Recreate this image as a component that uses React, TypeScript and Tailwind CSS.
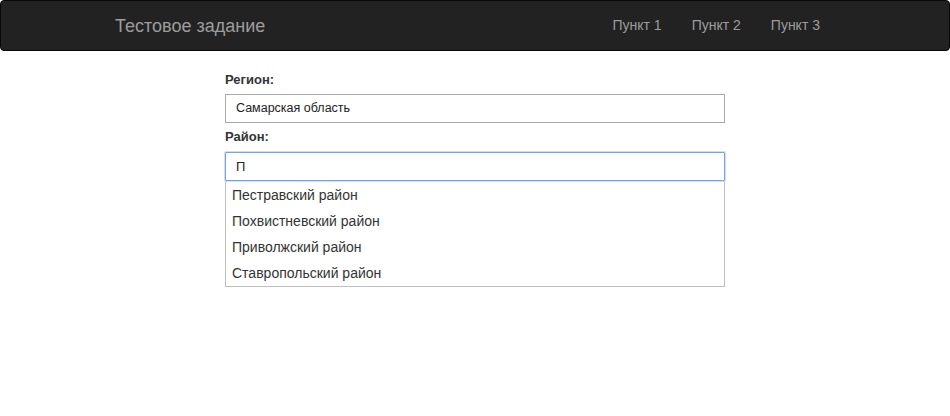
import React from "react";

export default function App() {
  const items = ["Пестравский район", "Похвистневский район", "Приволжский район", "Ставропольский район"];
  return (
    <div className="min-h-[416px] bg-white font-['Liberation_Sans',Arial,sans-serif] text-[#333]">
      <nav className="h-[51px] bg-[#222] border border-[#080808] rounded-[4px]">
        <div className="w-[750px] mx-auto px-[15px] flex items-center justify-between h-[49px]">
          <div className="text-[18px] text-[#9d9d9d] leading-[20px]">Тестовое задание</div>
          <div className="flex text-[14px] text-[#9d9d9d]">
            <span className="px-[15px]">Пункт 1</span>
            <span className="px-[15px]">Пункт 2</span>
            <span className="px-[15px]">Пункт 3</span>
          </div>
        </div>
      </nav>
      <div className="w-[500px] mx-auto pt-[20px]">
        <div className="text-[13px] font-bold leading-[17px] h-[17px]">Регион:</div>
        <div className="mt-[6px] h-[29px] border border-[#a9a9a9] flex items-center px-[10px] text-[12.5px] text-[#222]">
          Самарская область
        </div>
        <div className="mt-[5px] text-[13px] font-bold leading-[18px] h-[17px]">Район:</div>
        <div className="mt-[7px] h-[29px] border border-[#7aa0e8] shadow-[0_0_0_1px_rgba(122,160,232,0.35)] rounded-[1px] flex items-center px-[10px] text-[13px] text-[#222]">
          П
        </div>
        <div className="border-x border-b border-[#c0c0c0] pt-[1px]">
          {items.map((t) => (
            <div key={t} className="h-[26px] flex items-center px-[6px] text-[14px] text-[#333]">
              {t}
            </div>
          ))}
        </div>
      </div>
    </div>
  );
}
